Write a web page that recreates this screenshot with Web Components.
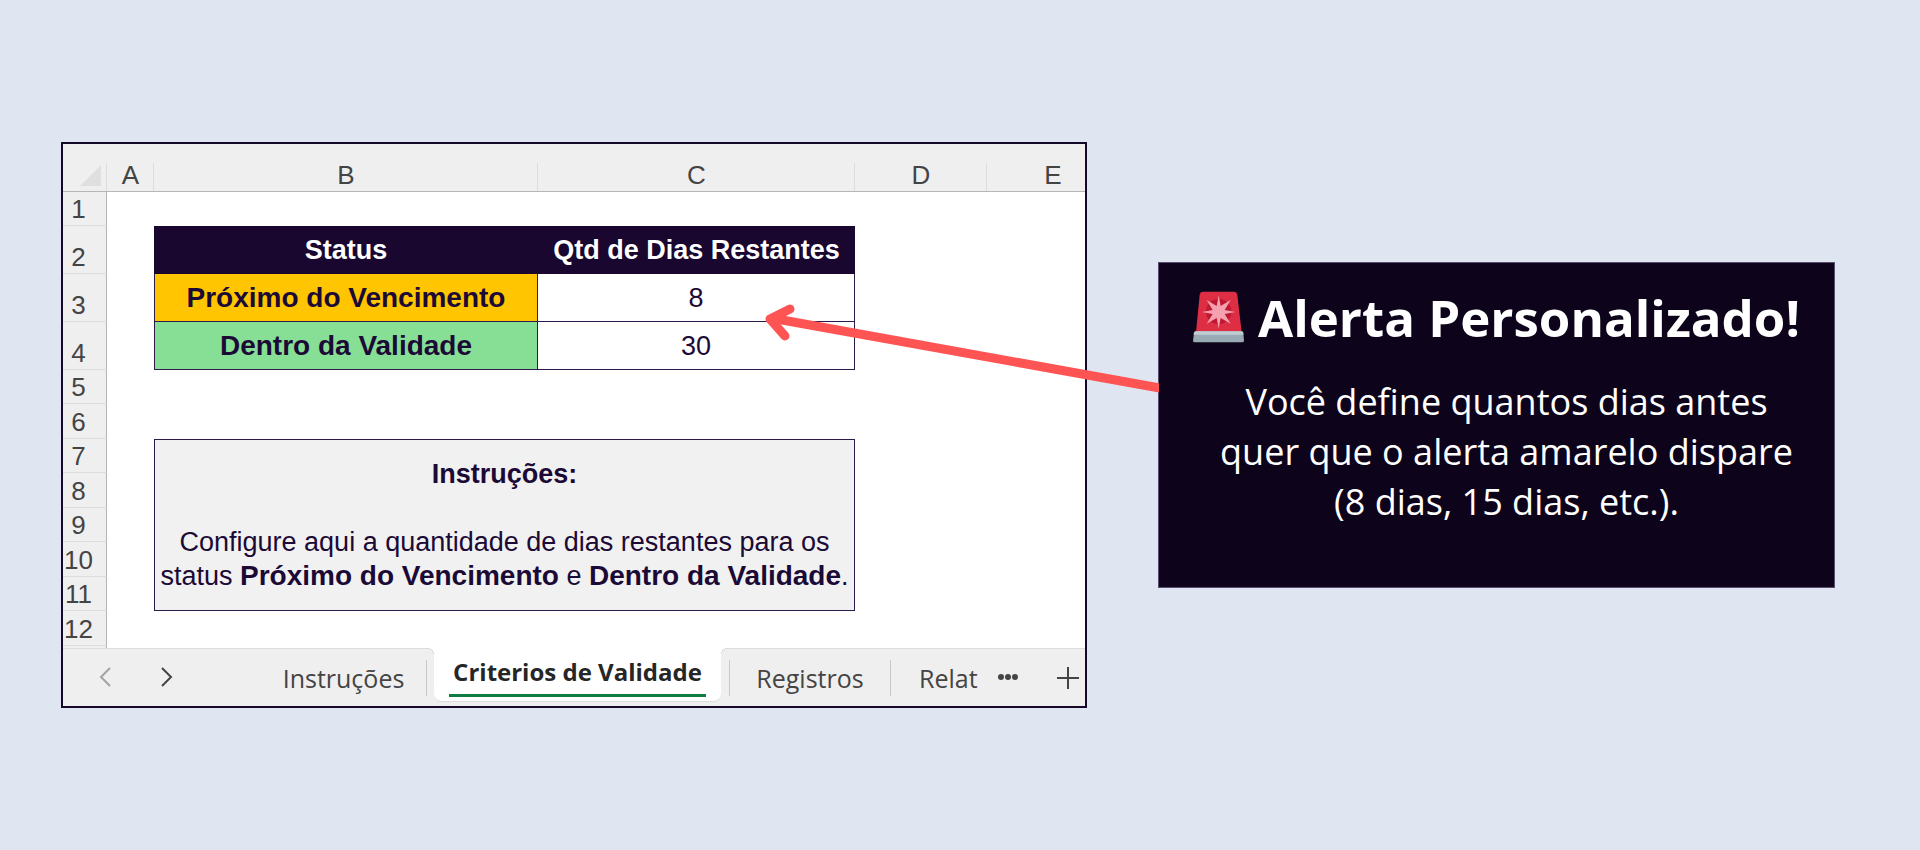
<!DOCTYPE html>
<html lang="pt-BR">
<head>
<meta charset="utf-8">
<title>Alerta Personalizado</title>
<style>
  body { margin: 0; background: #dfe6f2; }
</style>
</head>
<body>
<feature-page>
  <sheet-window slot="figure">
    <sheet-grid></sheet-grid>
    <sheet-tabs slot="footer"></sheet-tabs>
  </sheet-window>
  <callout-card slot="callout">
    <siren-icon slot="icon"></siren-icon>
    <span slot="title">Alerta Personalizado!</span>
    Você define quantos dias antes<br>quer que o alerta amarelo dispare<br>(8 dias, 15 dias, etc.).
  </callout-card>
</feature-page>

<script>
const define = (name, html) => {
  const template = document.createElement('template');
  template.innerHTML = html;
  customElements.define(name, class extends HTMLElement {
    constructor() {
      super();
      this.attachShadow({ mode: 'open' }).append(template.content.cloneNode(true));
    }
  });
};

define('feature-page', `
  <style>
    :host { display: block; }
    main {
      box-sizing: border-box;
      min-height: 100vh;
      display: grid;
      grid-template-columns: minmax(0, 1026fr) minmax(0, 677fr);
      column-gap: 71px;
      align-items: center;
      padding: 24px 85px 24px 61px;
    }
  </style>
  <main><slot name="figure"></slot><slot name="callout"></slot></main>
`);

define('sheet-window', `
  <style>
    :host {
      display: block;
      box-sizing: border-box;
      border: 2px solid #150828;
      background: #fff;
      overflow: hidden;
    }
  </style>
  <slot></slot><slot name="footer"></slot>
`);

define('sheet-grid', `
  <style>
    :host {
      display: block;
      overflow: hidden;
      font: 27px/32px "Liberation Sans", Arial, sans-serif;
      color: #1c0a36;
    }
    table { table-layout: fixed; width: 1056px; border-collapse: separate; border-spacing: 0; }
    th, td { padding: 0; box-sizing: border-box; text-align: center; vertical-align: middle; }
    .rows { width: 44px; } .a { width: 47px; } .b { width: 384px; } .c { width: 317px; } .d { width: 132px; }
    thead th {
      height: 48px;
      font-size: 26px;
      font-weight: 400;
      color: #444;
      background: linear-gradient(#dcdcdc, #dcdcdc) right bottom / 1px 28px no-repeat #efefef;
      border-bottom: 1px solid #b5b5b5;
      vertical-align: bottom;
    }
    thead svg { display: block; width: 21px; height: 21px; margin: 0 0 5px 17px; }
    tbody tr { height: 34px; }
    tbody tr:nth-child(even) { height: 35px; }
    tbody tr.tall { height: 48px; }
    tbody tr.rest { height: 2px; }
    tbody th[scope=row] {
      font-size: 26px;
      font-weight: 400;
      color: #444;
      background: #efefef;
      border-right: 1px solid #b5b5b5;
      border-bottom: 1px solid #dcdcdc;
      vertical-align: bottom;
      padding-right: 12px;
    }
    tbody .rest th[scope=row] { border-bottom: 0; }
    .head { background: #190730; color: #fff; font-weight: 700; }
    .label { font-size: 28px; font-weight: 700; border: 1px solid #2c1a49; border-top: 0; }
    .value { border: 1px solid #2c1a49; border-width: 0 1px 1px 0; }
    .soon { background: #ffc500; }
    .valid { background: #86df95; }
    .note { background: #f1f1f1; border: 1px solid #2c1a49; line-height: 34px; }
    .note p { margin: 0; }
    .note p:first-child { margin-bottom: 34px; font-weight: 700; }
    .note b { font-size: 28px; }
  </style>
  <table>
    <colgroup><col class="rows"><col class="a"><col class="b"><col class="c"><col class="d"><col class="d"></colgroup>
    <thead>
      <tr>
        <th><svg viewBox="0 0 21 21" aria-hidden="true"><path d="M21 0V21H0Z" fill="#dfdfdf"/></svg></th>
        <th scope="col">A</th><th scope="col">B</th><th scope="col">C</th><th scope="col">D</th><th scope="col">E</th>
      </tr>
    </thead>
    <tbody>
      <tr><th scope="row">1</th><td></td><td></td><td></td><td></td><td></td></tr>
      <tr class="tall"><th scope="row">2</th><td></td><th class="head">Status</th><th class="head">Qtd de Dias Restantes</th><td></td><td></td></tr>
      <tr class="tall"><th scope="row">3</th><td></td><td class="label soon">Próximo do Vencimento</td><td class="value">8</td><td></td><td></td></tr>
      <tr class="tall"><th scope="row">4</th><td></td><td class="label valid">Dentro da Validade</td><td class="value">30</td><td></td><td></td></tr>
      <tr><th scope="row">5</th><td></td><td></td><td></td><td></td><td></td></tr>
      <tr><th scope="row">6</th><td></td><td></td><td></td><td></td><td></td></tr>
      <tr><th scope="row">7</th><td></td>
        <td class="note" colspan="2" rowspan="5">
          <p>Instruções:</p>
          <p>Configure aqui a quantidade de dias restantes para os<br>status <b>Próximo do Vencimento</b> e <b>Dentro da Validade</b>.</p>
        </td><td></td><td></td></tr>
      <tr><th scope="row">8</th><td></td><td></td><td></td></tr>
      <tr><th scope="row">9</th><td></td><td></td><td></td></tr>
      <tr><th scope="row">10</th><td></td><td></td><td></td></tr>
      <tr><th scope="row">11</th><td></td><td></td><td></td></tr>
      <tr><th scope="row">12</th><td></td><td></td><td></td><td></td><td></td></tr>
      <tr class="rest"><th scope="row"></th><td></td><td></td><td></td><td></td><td></td></tr>
    </tbody>
  </table>
`);

define('sheet-tabs', `
  <style>
    :host { display: block; font: 25px/36px "Open Sans", "Noto Sans", sans-serif; color: #444; }
    nav {
      display: flex; align-items: flex-start; height: 58px;
      background: linear-gradient(#dcdcdc, #dcdcdc) top / 100% 1px no-repeat #efefef;
    }
    button {
      box-sizing: border-box;
      margin: 0; padding: 0; border: 0; background: none;
      font: inherit; color: inherit; white-space: nowrap;
    }
    svg { display: block; fill: none; stroke: currentColor; stroke-width: 2; }
    .arrow { width: 12px; margin-top: 19px; }
    .prev { margin-left: 36px; color: #a3a3a3; }
    .next { margin-left: 50px; }
    .tabs { display: flex; flex: 1; min-width: 0; margin-left: 88px; }
    .tab { height: 36px; margin-top: 12px; border-right: 1px solid #c9c9c9; }
    .first { width: 166px; }
    .current {
      position: relative;
      width: 287px; height: 54px; margin: 0 8px 0 7px; padding: 0 15px;
      background: #fff; border-bottom: 1px solid #dcdcdc; border-radius: 0 0 8px 8px;
      font-size: 24px; font-weight: 700; color: #262626;
    }
    /* concave corners where the open tab meets the sheet */
    .current::before, .current::after { content: ""; position: absolute; top: 0; width: 6px; height: 6px; }
    .current::before { right: 100%; background: radial-gradient(circle at 0 100%, #efefef 5px, #dcdcdc 5px 6px, #fff 6px); }
    .current::after { left: 100%; background: radial-gradient(circle at 100% 100%, #efefef 5px, #dcdcdc 5px 6px, #fff 6px); }
    .current span { display: block; padding: 2px 0 4px; border-bottom: 3px solid #107c41; }
    .records { width: 162px; border-left: 1px solid #c9c9c9; }
    .report { flex: 1; min-width: 0; padding-left: 28px; border-right: 0; text-align: left; }
    .more { margin: 25px 0 0 18px; }
    .more svg { fill: currentColor; stroke: none; }
    .add { margin: 19px 6px 0 38px; }
  </style>
  <nav aria-label="Planilhas">
    <button class="arrow prev" aria-label="Anterior"><svg width="12" height="20" viewBox="0 0 12 20"><path d="M11 1 2 10l9 9"/></svg></button>
    <button class="arrow next" aria-label="Próxima"><svg width="12" height="20" viewBox="0 0 12 20"><path d="M1 1l9 9-9 9"/></svg></button>
    <div class="tabs">
      <button class="tab first">Instruções</button>
      <button class="current" aria-current="page"><span>Criterios de Validade</span></button>
      <button class="tab records">Registros</button>
      <button class="tab report">Relat</button>
    </div>
    <button class="more" aria-label="Mais planilhas"><svg width="22" height="8" viewBox="0 0 22 8"><circle cx="4" cy="4" r="3"/><circle cx="11" cy="4" r="3"/><circle cx="18" cy="4" r="3"/></svg></button>
    <button class="add" aria-label="Nova planilha"><svg width="22" height="22" viewBox="0 0 22 22"><path d="M11 0v22M0 11h22"/></svg></button>
  </nav>
`);

define('callout-card', `
  <style>
    :host {
      display: block;
      position: relative;
      box-sizing: border-box;
      padding: 22px 24px 60px;
      border: 1px solid #5b4d70;
      background: #0d041b;
      color: #fff;
      font: 36px/50px "Open Sans", "Noto Sans", sans-serif;
      text-align: center;
    }
    h2 {
      display: flex; align-items: center; justify-content: center; gap: 14px;
      margin: 0 0 28px;
      font-size: 51px; line-height: 64px; font-weight: 700; white-space: nowrap;
    }
    p { margin: 0; padding-left: 20px; }
    /* pointer that runs from the card back over the sheet */
    .pointer { position: absolute; right: 100%; top: 37px; width: 400px; height: 100px; }
  </style>
  <svg class="pointer" viewBox="0 0 400 100" fill="none" stroke="#ff5454" stroke-width="9" stroke-linejoin="round" aria-hidden="true">
    <path d="M12 18 401 88"/><path d="M31 9 11 19 26 36" stroke-linecap="round"/>
  </svg>
  <h2><slot name="icon"></slot><slot name="title"></slot></h2>
  <p><slot></slot></p>
`);

define('siren-icon', `
  <style>
    :host { display: block; width: 51px; height: 52px; }
    svg { display: block; width: 100%; height: 100%; }
  </style>
  <svg viewBox="42 35 153 154" aria-hidden="true">
    <path d="M73 36H164Q174 36 175 46L188 158H51L62 46Q63 36 73 36Z" fill="#dd2e44"/>
    <circle cx="119" cy="96" r="38" fill="#be1931"/>
    <path d="M119 47 125 79 155 61 137 91 169 97 137 103 155 132 125 115 119 147 113 115 83 132 101 103 69 97 101 91 83 61 113 79Z" fill="#f4a0ae"/>
    <path d="M51 155H187Q192 155 193 160L195 183Q195 188 189 188H48Q42 188 42 183L45 160Q46 155 51 155Z" fill="#9aaab4"/>
    <path d="M51 155H187Q194 155 193 165H44Q44 155 51 155Z" fill="#bfccd4"/>
  </svg>
`);
</script>
</body>
</html>
